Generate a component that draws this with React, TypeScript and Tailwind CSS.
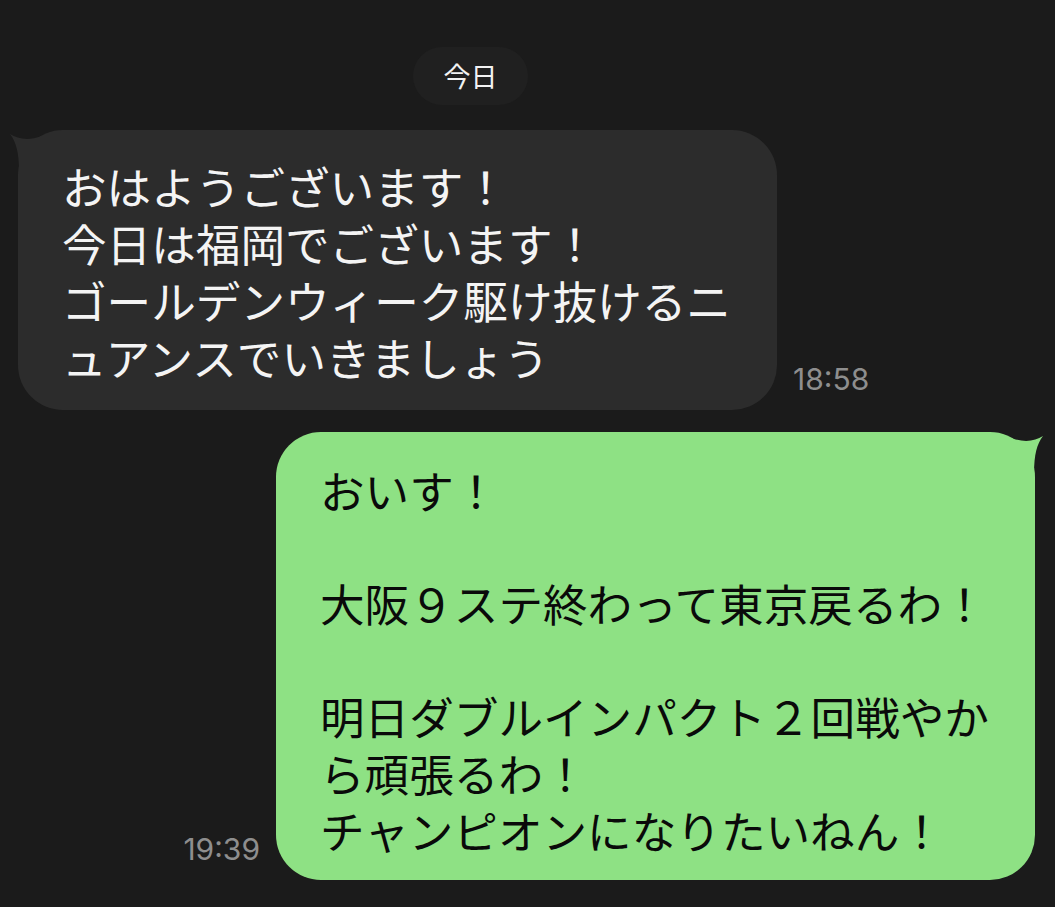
export default function App() {
  const jp = { fontFamily: '"Noto Sans CJK JP", "Noto Sans", sans-serif' };
  const num = { fontFamily: 'Inter, "Liberation Sans", sans-serif' };

  return (
    <div className="w-[1055px] h-[907px] bg-[#1b1b1b] overflow-hidden" style={jp}>
      {/* 日付 */}
      <div className="flex pl-[413px] pt-[47px]">
        <div className="h-[58px] w-[115px] rounded-full bg-[#202020] flex items-center justify-center text-[27px] text-[#f2f2f2]">
          今日
        </div>
      </div>

      {/* 受信 */}
      <div className="flex items-end mt-[25px] pl-[18px]">
        <div className="relative w-[759px] rounded-[45px] bg-[#2c2c2c] pl-[44px] pt-[27px] pb-[25px] text-[44.6px] leading-[57px] text-[#f4f4f4] whitespace-pre-line">
          <svg className="absolute left-[-10px] top-0" width="42" height="42" viewBox="0 0 42 42">
            <path d="M34 6 C20 11 10 9 2 4 C8 12 11 22 11 42 L42 42 L42 6 Z" fill="#2c2c2c" />
          </svg>
          <span className="relative">
            {'おはようございます！\n今日は福岡でございます！\nゴールデンウィーク駆け抜けるニ\nュアンスでいきましょう'}
          </span>
        </div>
        <div className="ml-[16px] mb-[16px] text-[30px] leading-none text-[#8e8e8e]" style={num}>
          18:58
        </div>
      </div>

      {/* 送信 */}
      <div className="flex items-end justify-end mt-[22px] pr-[20px]">
        <div className="mr-[16px] mb-[16px] text-[30px] leading-none text-[#8e8e8e]" style={num}>
          19:39
        </div>
        <div className="relative w-[759px] rounded-[45px] bg-[#8ee184] pl-[44px] pt-[30px] pb-[22px] text-[44.6px] leading-[56.6px] text-[#0a0a0a] whitespace-pre-line">
          <svg className="absolute right-[-10px] top-0" width="42" height="42" viewBox="0 0 42 42">
            <path d="M8 6 C22 11 32 9 40 4 C34 12 31 22 31 42 L0 42 L0 6 Z" fill="#8ee184" />
          </svg>
          <span className="relative">
            {'おいす！\n\n大阪９ステ終わって東京戻るわ！\n\n明日ダブルインパクト２回戦やか\nら頑張るわ！\nチャンピオンになりたいねん！'}
          </span>
        </div>
      </div>
    </div>
  );
}
